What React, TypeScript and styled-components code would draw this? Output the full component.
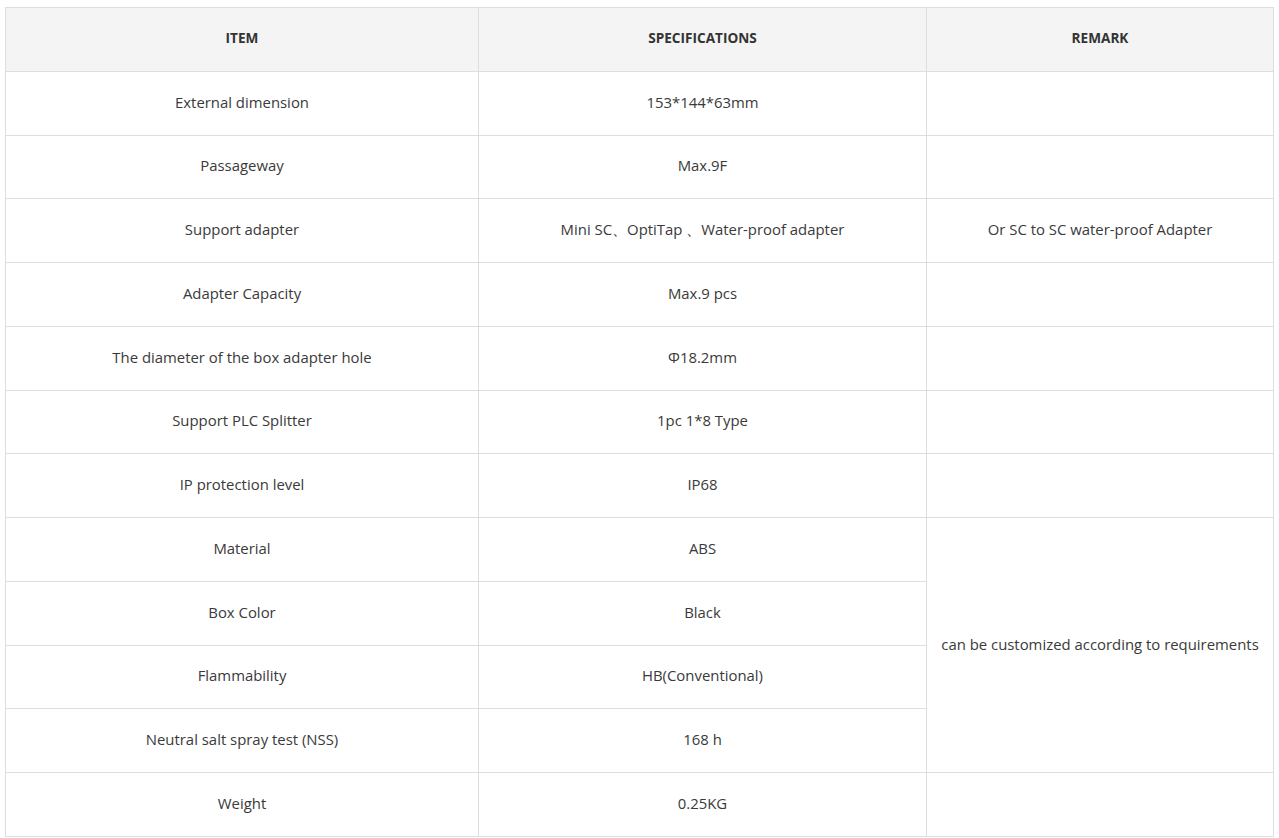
import React from "react";
import styled, { createGlobalStyle } from "styled-components";

const Global = createGlobalStyle`
  html, body { margin: 0; padding: 0; background: #fff; }
  body { font-family: "Open Sans", "Liberation Sans", sans-serif; }
`;

const Wrap = styled.div`
  padding: 7px 6px 0 5px;
`;

const Table = styled.table`
  width: 1268px;
  border-collapse: collapse;
  table-layout: fixed;
  color: #333;
  font-size: 14.9px;
`;

const Col = styled.col<{ $w: number }>`
  width: ${(p) => p.$w}px;
`;

const Row = styled.tr`
  height: 63.75px;
`;

const Head = styled.th`
  background: #f4f4f4;
  border: 1px solid #dedede;
  font-size: 13.6px;
  font-weight: 700;
  text-transform: uppercase;
  color: #333;
  text-align: center;
  vertical-align: middle;
  padding: 0 0 3px;
`;

const Cell = styled.td`
  border: 1px solid #dedede;
  text-align: center;
  vertical-align: middle;
  padding: 0 4px 3px;
  color: #3a3a3a;
  white-space: nowrap;
`;

type R = { item: string; spec: string; remark?: string; span?: number; skip?: boolean };

const rows: R[] = [
  { item: "External dimension", spec: "153*144*63mm", remark: "" },
  { item: "Passageway", spec: "Max.9F", remark: "" },
  { item: "Support adapter", spec: "Mini SC、OptiTap 、Water-proof adapter", remark: "Or SC to SC water-proof Adapter" },
  { item: "Adapter Capacity", spec: "Max.9 pcs", remark: "" },
  { item: "The diameter of the box adapter hole", spec: "Φ18.2mm", remark: "" },
  { item: "Support PLC Splitter", spec: "1pc 1*8 Type", remark: "" },
  { item: "IP protection level", spec: "IP68", remark: "" },
  { item: "Material", spec: "ABS", remark: "can be customized according to requirements", span: 4 },
  { item: "Box Color", spec: "Black", skip: true },
  { item: "Flammability", spec: "HB(Conventional)", skip: true },
  { item: "Neutral salt spray test (NSS)", spec: "168 h", skip: true },
  { item: "Weight", spec: "0.25KG", remark: "" },
];

export default function App() {
  return (
    <>
      <Global />
      <Wrap>
        <Table>
          <colgroup>
            <Col $w={473} />
            <Col $w={448} />
            <Col $w={347} />
          </colgroup>
          <thead>
            <Row>
              <Head>Item</Head>
              <Head>Specifications</Head>
              <Head>Remark</Head>
            </Row>
          </thead>
          <tbody>
            {rows.map((r) => (
              <Row key={r.item}>
                <Cell>{r.item}</Cell>
                <Cell>{r.spec}</Cell>
                {!r.skip && <Cell rowSpan={r.span || 1}>{r.remark}</Cell>}
              </Row>
            ))}
          </tbody>
        </Table>
      </Wrap>
    </>
  );
}
